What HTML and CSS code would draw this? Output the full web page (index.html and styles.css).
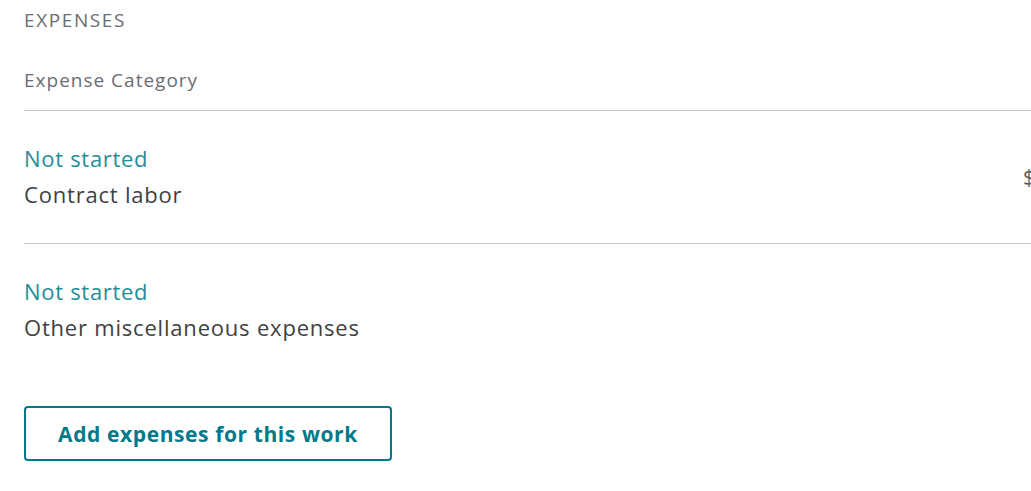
FILE: index.html
```html
<!DOCTYPE html>
<html>
<head>
<meta charset="utf-8">
<link rel="stylesheet" href="styles.css">
</head>
<body>
<div class="page">
  <div class="section-title">EXPENSES</div>
  <div class="table">
    <div class="head-row">
      <div class="col-cat">Expense Category</div>
    </div>
    <div class="row">
      <div class="col-cat cell">
        <div class="status">Not started</div>
        <div class="name">Contract labor</div>
      </div>
      <div class="col-amt">$</div>
    </div>
    <div class="row last">
      <div class="col-cat cell">
        <div class="status">Not started</div>
        <div class="name">Other miscellaneous expenses</div>
      </div>
    </div>
  </div>
  <button class="btn">Add expenses for this work</button>
</div>
</body>
</html>
```
FILE: styles.css
```css
html, body {
  margin: 0;
  padding: 0;
  background: #fff;
  overflow: hidden;
}
body {
  font-family: "Open Sans", Lato, sans-serif;
  color: #404144;
}
.page {
  padding: 8px 0 0 24px;
  width: 1100px;
}
.section-title {
  font-size: 19px;
  line-height: 24px;
  letter-spacing: 1.6px;
  color: #6b6c72;
}
.table {
  margin-top: 36px;
}
.head-row {
  display: flex;
  font-size: 19px;
  line-height: 24px;
  letter-spacing: 1px;
  color: #6b6c72;
  padding-bottom: 18px;
  border-bottom: 1px solid #c4c6cc;
}
.row {
  display: flex;
  align-items: center;
  height: 132px;
  border-bottom: 1px solid #c4c6cc;
}
.row.last {
  border-bottom: none;
}
.col-cat {
  width: 999px;
  flex: none;
}
.cell {
  padding-bottom: 2px;
}
.status {
  font-size: 22px;
  line-height: 36px;
  letter-spacing: 0.7px;
  color: #1f8e99;
}
.name {
  font-size: 22px;
  line-height: 36px;
  letter-spacing: 0.8px;
  color: #404144;
}
.col-amt {
  font-size: 21px;
  color: #5a5b5f;
}
.btn {
  display: block;
  margin-top: 30px;
  width: 368px;
  height: 55px;
  border: 2px solid #00798b;
  border-radius: 4px;
  background: #fff;
  color: #00798b;
  font-family: "Open Sans", Lato, sans-serif;
  font-weight: 700;
  font-size: 21px;
  letter-spacing: 0.6px;
  padding: 0;
}
```
